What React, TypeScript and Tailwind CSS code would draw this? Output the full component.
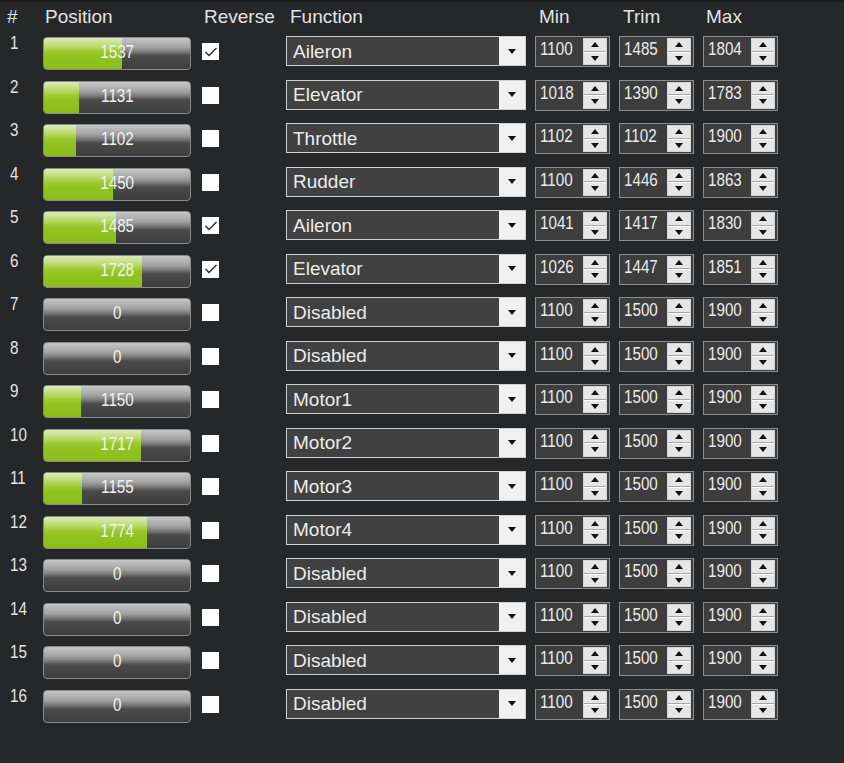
import React from 'react'

type Row = {
  pos: number
  rev: boolean
  fn: string
  min: number
  trim: number
  max: number
}

const rows: Row[] = [
  { pos: 1537, rev: true, fn: 'Aileron', min: 1100, trim: 1485, max: 1804 },
  { pos: 1131, rev: false, fn: 'Elevator', min: 1018, trim: 1390, max: 1783 },
  { pos: 1102, rev: false, fn: 'Throttle', min: 1102, trim: 1102, max: 1900 },
  { pos: 1450, rev: false, fn: 'Rudder', min: 1100, trim: 1446, max: 1863 },
  { pos: 1485, rev: true, fn: 'Aileron', min: 1041, trim: 1417, max: 1830 },
  { pos: 1728, rev: true, fn: 'Elevator', min: 1026, trim: 1447, max: 1851 },
  { pos: 0, rev: false, fn: 'Disabled', min: 1100, trim: 1500, max: 1900 },
  { pos: 0, rev: false, fn: 'Disabled', min: 1100, trim: 1500, max: 1900 },
  { pos: 1150, rev: false, fn: 'Motor1', min: 1100, trim: 1500, max: 1900 },
  { pos: 1717, rev: false, fn: 'Motor2', min: 1100, trim: 1500, max: 1900 },
  { pos: 1155, rev: false, fn: 'Motor3', min: 1100, trim: 1500, max: 1900 },
  { pos: 1774, rev: false, fn: 'Motor4', min: 1100, trim: 1500, max: 1900 },
  { pos: 0, rev: false, fn: 'Disabled', min: 1100, trim: 1500, max: 1900 },
  { pos: 0, rev: false, fn: 'Disabled', min: 1100, trim: 1500, max: 1900 },
  { pos: 0, rev: false, fn: 'Disabled', min: 1100, trim: 1500, max: 1900 },
  { pos: 0, rev: false, fn: 'Disabled', min: 1100, trim: 1500, max: 1900 },
]

function Num({ children, origin = 'origin-left' }: { children: React.ReactNode; origin?: string }) {
  return <span className={`inline-block scale-x-[0.8] ${origin}`}>{children}</span>
}

function PosBar({ value }: { value: number }) {
  const pct = value <= 0 ? 0 : Math.min(1, Math.max(0, (value - 800) / 1400))
  return (
    <div className="relative w-[148px] h-[33px] rounded-[4px] border border-[#8a8a8a] overflow-hidden bg-[linear-gradient(to_bottom,#c6c6c6_0%,#a2a2a2_30%,#7a7a7a_45%,#4a4a4a_58%,#3e3e3e_100%)]">
      {pct > 0 && (
        <div
          className="absolute left-0 top-0 bottom-0 bg-[linear-gradient(to_bottom,#dcebbd_0%,#bcdc72_25%,#9cc82e_45%,#92c21f_60%,#8cbd1b_100%)]"
          style={{ width: `${pct * 148}px` }}
        />
      )}
      <div className="relative flex h-full items-center justify-center pb-[4px] text-[19px] leading-none text-[#f2f2f2]">
        <Num origin="origin-center">{value}</Num>
      </div>
    </div>
  )
}

function Check({ on }: { on: boolean }) {
  return (
    <div className="w-[17px] h-[17px] bg-white flex items-center justify-center">
      {on && (
        <svg width="14" height="12" viewBox="0 0 14 12">
          <path d="M1.5 6 L5 9.5 L12.5 2" fill="none" stroke="#2e2e2e" strokeWidth="1.5" />
        </svg>
      )}
    </div>
  )
}

function Select({ label }: { label: string }) {
  return (
    <div className="w-[240px] h-[30px] border border-[#cfcfcf] flex bg-[#414141]">
      <div className="flex-1 flex items-center pl-[6px] text-[19px] leading-none text-[#ececec]">{label}</div>
      <div className="w-[26px] bg-[#f0f0f0] flex items-center justify-center">
        <svg width="8" height="5" viewBox="0 0 8 5">
          <path d="M0 0 H8 L4 5 Z" fill="#111" />
        </svg>
      </div>
    </div>
  )
}

function Spin({ value }: { value: number }) {
  return (
    <div className="w-[75px] h-[31px] border border-[#8c8c8c] bg-[#3d3d3d] flex">
      <div className="flex-1 pl-[4px] pt-[2px] text-[19px] leading-[19px] text-[#ececec]">
        <Num>{value}</Num>
      </div>
      <div className="w-[24px] my-[1px] mr-[2px] flex flex-col border border-[#d6d6d6] bg-[#e6e6e6]">
        <div className="flex-1 flex items-center justify-center border-b border-[#a6a6a6]">
          <svg width="8" height="5" viewBox="0 0 8 5">
            <path d="M0 5 H8 L4 0 Z" fill="#111" />
          </svg>
        </div>
        <div className="flex-1 flex items-center justify-center border-t border-white">
          <svg width="8" height="5" viewBox="0 0 8 5">
            <path d="M0 0 H8 L4 5 Z" fill="#111" />
          </svg>
        </div>
      </div>
    </div>
  )
}

export default function App() {
  return (
    <div className="w-[844px] h-[763px] bg-[#262729] border-t-2 border-[#1c1d1e] font-['Liberation_Sans',Arial,sans-serif] text-[#e2e2e2] overflow-hidden">
      <div className="flex h-[28px] items-center text-[19px] leading-none">
        <div className="w-[43px] pl-[7px]">#</div>
        <div className="w-[159px] pl-[2px]">Position</div>
        <div className="w-[84px] pl-[2px] whitespace-nowrap">Reverse</div>
        <div className="w-[249px] pl-[4px]">Function</div>
        <div className="w-[84px] pl-[4px]">Min</div>
        <div className="w-[84px] pl-[4px]">Trim</div>
        <div className="w-[84px] pl-[3px]">Max</div>
      </div>
      <div className="flex flex-col">
        {rows.map((r, i) => (
          <div key={i} className="flex h-[43.5px] items-start">
            <div className="w-[43px] pl-[10px] pt-[3px] text-[19px] leading-[19px] text-[#e4e4e4]">
              <Num>{i + 1}</Num>
            </div>
            <div className="mt-[7px]">
              <PosBar value={r.pos} />
            </div>
            <div className="ml-[11px] mt-[13px]">
              <Check on={r.rev} />
            </div>
            <div className="ml-[67px] mt-[6px]">
              <Select label={r.fn} />
            </div>
            <div className="ml-[9px] mt-[6px]">
              <Spin value={r.min} />
            </div>
            <div className="ml-[9px] mt-[6px]">
              <Spin value={r.trim} />
            </div>
            <div className="ml-[9px] mt-[6px]">
              <Spin value={r.max} />
            </div>
          </div>
        ))}
      </div>
    </div>
  )
}
